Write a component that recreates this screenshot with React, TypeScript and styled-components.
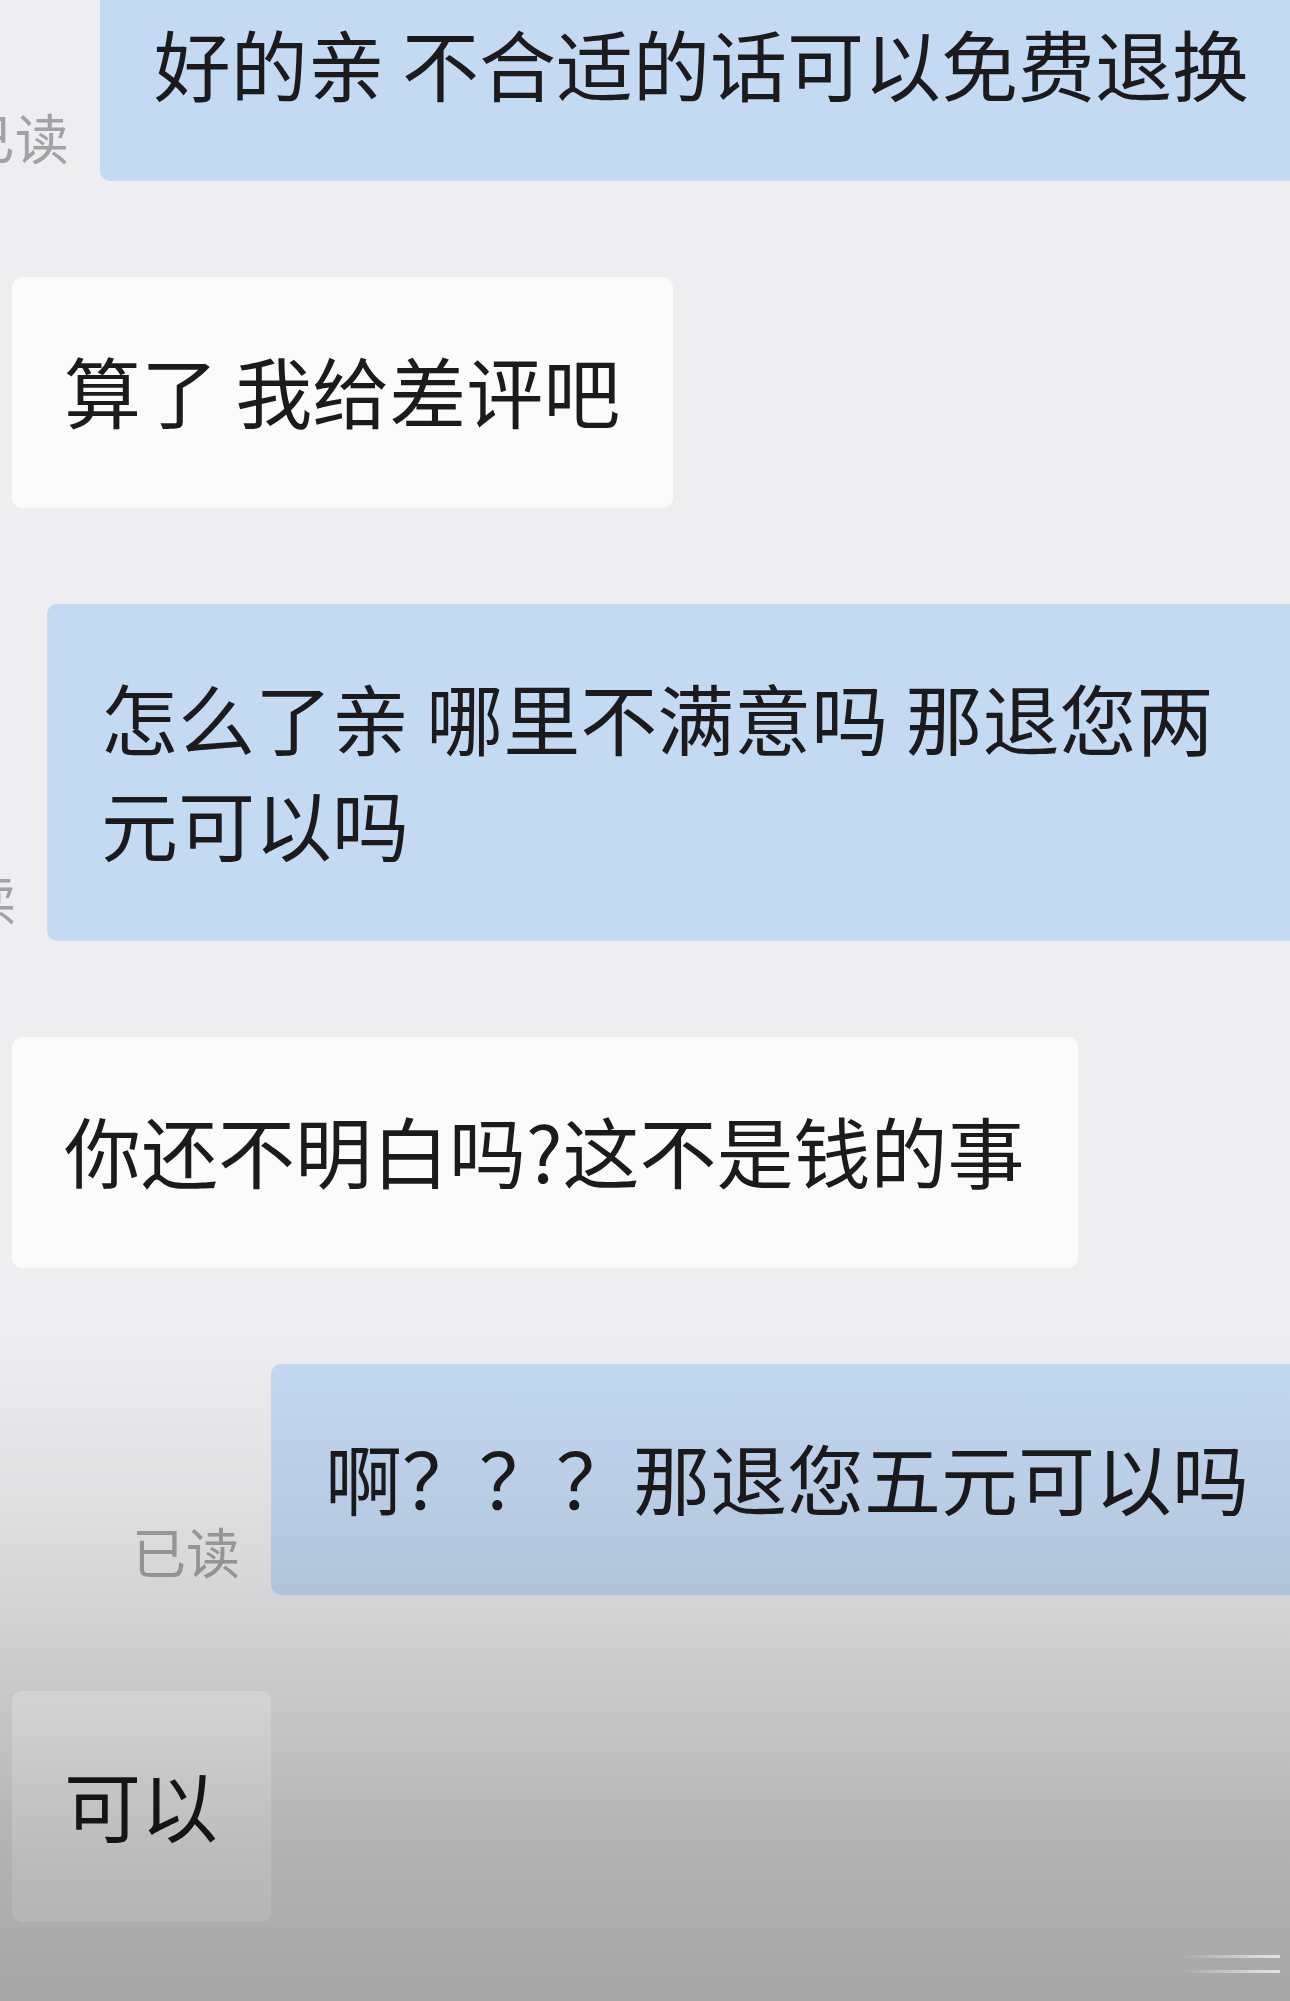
import * as React from "react"
import styled, { createGlobalStyle } from "styled-components"

const GlobalStyle = createGlobalStyle`
  html, body {
    margin: 0;
    padding: 0;
    overflow: hidden;
    background: #eeeef0;
  }
`

const Screen = styled.div`
  position: relative;
  width: 1290px;
  height: 2001px;
  overflow: hidden;
  background: #eeeef0;
  font-family: "Noto Sans CJK SC", "Noto Sans", sans-serif;
`

// the darkening at the foot of the screenshot
const Shade = styled.div`
  position: absolute;
  inset: 0;
  pointer-events: none;
  background: linear-gradient(
    to bottom,
    rgba(0, 0, 0, 0) 0px,
    rgba(0, 0, 0, 0) 1330px,
    rgba(0, 0, 0, 0.06) 1500px,
    rgba(0, 0, 0, 0.16) 1700px,
    rgba(0, 0, 0, 0.25) 1850px,
    rgba(0, 0, 0, 0.3) 2001px
  );
`

const Watermark = styled.svg`
  position: absolute;
  right: 10px;
  bottom: 26px;
  opacity: 0.8;
`

const Thread = styled.div`
  display: flex;
  flex-direction: column;
  gap: 96px;
  margin-top: -50px;
`

const Row = styled.div<{ $mine?: boolean }>`
  display: flex;
  align-items: flex-end;
  justify-content: ${p => (p.$mine ? "flex-end" : "flex-start")};
  padding-left: ${p => (p.$mine ? "0" : "12px")};
`

const ReadMark = styled.span`
  flex-shrink: 0;
  font-size: 54px;
  line-height: 54px;
  color: #a2a2a4;
  margin-right: 31px;
  margin-bottom: 17px;
  white-space: nowrap;
`

const Bubble = styled.div<{ $mine?: boolean }>`
  flex-shrink: 0;
  box-sizing: border-box;
  max-width: ${p => (p.$mine ? "1255px" : "1100px")};
  margin-right: ${p => (p.$mine ? "-12px" : "0")};
  padding: ${p => (p.$mine ? "60px 53px 65px 54px" : "60px 53px 65px 52px")};
  border-radius: 10px;
  background: ${p => (p.$mine ? "#c4daf3" : "#fbfbfc")};
  color: #1b1b1d;
  font-size: 77px;
  line-height: 106px;
`

type Message = { mine: boolean; text: string; read?: boolean }

const messages: Message[] = [
  { mine: true, text: "好的亲 不合适的话可以免费退换", read: true },
  { mine: false, text: "算了 我给差评吧" },
  { mine: true, text: "怎么了亲 哪里不满意吗 那退您两元可以吗", read: true },
  { mine: false, text: "你还不明白吗?这不是钱的事" },
  { mine: true, text: "啊？？？那退您五元可以吗", read: true },
  { mine: false, text: "可以" },
]

export default function App() {
  return (
    <Screen>
      <GlobalStyle />
      <Thread>
        {messages.map((m, i) => (
          <Row key={i} $mine={m.mine}>
            {m.read && <ReadMark>已读</ReadMark>}
            <Bubble $mine={m.mine}>{m.text}</Bubble>
          </Row>
        ))}
      </Thread>
      <Shade />
      <Watermark width="100" height="24" viewBox="0 0 100 24">
        <defs>
          <linearGradient id="wm" x1="0" x2="1">
            <stop offset="0" stopColor="#fff" stopOpacity="0" />
            <stop offset="1" stopColor="#fff" stopOpacity="0.9" />
          </linearGradient>
        </defs>
        <rect x="0" y="4" width="100" height="3" fill="url(#wm)" />
        <rect x="0" y="19" width="100" height="3" fill="url(#wm)" />
      </Watermark>
    </Screen>
  )
}
